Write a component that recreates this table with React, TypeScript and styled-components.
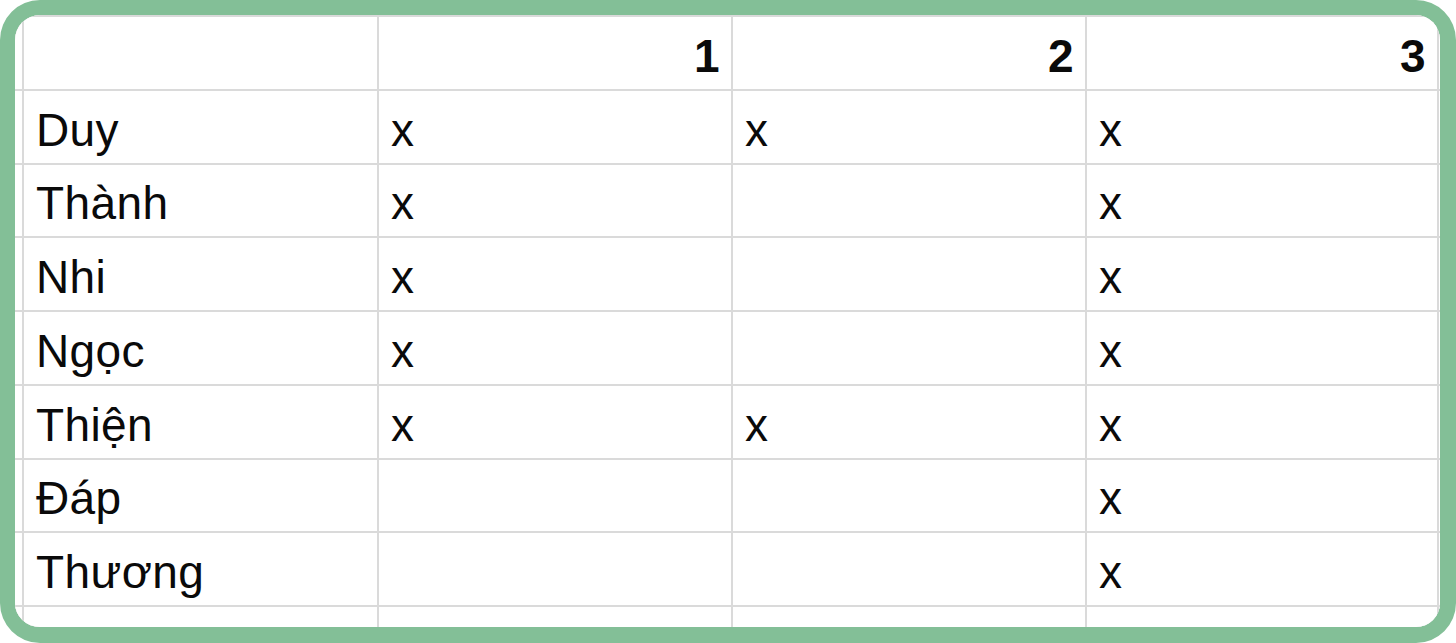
import React from 'react';
import styled, { createGlobalStyle } from 'styled-components';

const GlobalStyle = createGlobalStyle`
  html, body {
    margin: 0;
    padding: 0;
    background: #ffffff;
  }
  * {
    box-sizing: border-box;
  }
`;

const Frame = styled.div`
  width: 1456px;
  height: 643px;
  border-style: solid;
  border-color: #83bf97;
  border-width: 15px 16px 16px 15px;
  border-radius: 40px;
  background: #ffffff;
  overflow: hidden;
`;

const Sheet = styled.div`
  display: grid;
  grid-template-columns: 7px 353px 352px 352px 350px 10px;
  grid-auto-rows: 71.75px;
  gap: 2px;
  padding-top: 2px;
  background: #dadada;
`;

// cut-off columns at the left and right edge of the crop
const Edge = styled.div`
  background: #ffffff;
  min-width: 0;
`;

const Cell = styled.div<{ $head?: boolean }>`
  background: #ffffff;
  min-width: 0;
  display: flex;
  align-items: flex-end;
  justify-content: ${p => (p.$head ? 'flex-end' : 'flex-start')};
  padding: 0 11px 10px 12px;
  font-family: 'Liberation Sans', Arial, sans-serif;
  font-size: 46px;
  letter-spacing: 0.4px;
  line-height: 1;
  font-weight: ${p => (p.$head ? 700 : 400)};
  color: #0a0a0a;
  white-space: nowrap;
  overflow: hidden;
`;

const rows: [string, boolean, boolean, boolean][] = [
  ['Duy', true, true, true],
  ['Thành', true, false, true],
  ['Nhi', true, false, true],
  ['Ngọc', true, false, true],
  ['Thiện', true, true, true],
  ['Đáp', false, false, true],
  ['Thương', false, false, true],
];

const mark = (v: boolean) => (v ? 'x' : '');

const App: React.FC = () => {
  return (
    <>
      <GlobalStyle />
      <Frame>
        <Sheet>
          <Edge />
          <Cell />
          <Cell $head>1</Cell>
          <Cell $head>2</Cell>
          <Cell $head>3</Cell>
          <Edge />
          {rows.map(([name, a, b, c]) => (
            <React.Fragment key={name}>
              <Edge />
              <Cell>{name}</Cell>
              <Cell>{mark(a)}</Cell>
              <Cell>{mark(b)}</Cell>
              <Cell>{mark(c)}</Cell>
              <Edge />
            </React.Fragment>
          ))}
          <Edge />
          <Cell />
          <Cell />
          <Cell />
          <Cell />
          <Edge />
        </Sheet>
      </Frame>
    </>
  );
};

export default App;
